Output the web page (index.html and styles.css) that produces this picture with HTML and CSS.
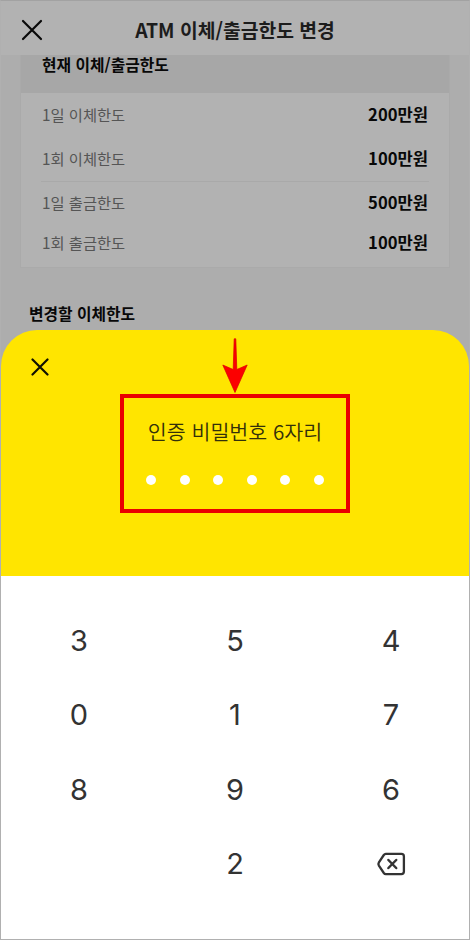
FILE: index.html
```
<!DOCTYPE html>
<html lang="ko">
<head>
  <meta charset="UTF-8">
  <meta name="viewport" content="width=device-width, initial-scale=1.0">
  <title>ATM 이체/출금한도 변경</title>
  <link rel="stylesheet" href="styles.css">
</head>
<body>
  <div class="screen">
    <header class="topbar">
      <svg class="close" width="22" height="22" viewBox="0 0 22 22">
        <path d="M2 2L20 20M20 2L2 20" stroke="#080808" stroke-width="2.2" stroke-linecap="round"/>
      </svg>
      <h1>ATM 이체/출금한도 변경</h1>
    </header>

    <main class="content">
      <section class="card">
        <h2>현재 이체/출금한도</h2>
        <div class="rows">
          <div class="row"><span>1일 이체한도</span><strong>200만원</strong></div>
          <div class="row"><span>1회 이체한도</span><strong>100만원</strong></div>
        </div>
        <div class="rows last">
          <div class="row"><span>1일 출금한도</span><strong>500만원</strong></div>
          <div class="row"><span>1회 출금한도</span><strong>100만원</strong></div>
        </div>
      </section>
      <h3>변경할 이체한도</h3>
    </main>

    <section class="sheet">
      <svg class="sheet-close" width="18" height="18" viewBox="0 0 18 18">
        <path d="M1.5 1.5L16.5 16.5M16.5 1.5L1.5 16.5" stroke="#111100" stroke-width="2.2" stroke-linecap="round"/>
      </svg>
      <svg class="arrow" width="26" height="56" viewBox="0 0 26 56">
        <path d="M12.2 0.8H13.8L14.8 31.5L25.2 27L13 54.5L0.8 27L11.2 31.5Z" fill="#fc0000" stroke="#d90000" stroke-width="0.7"/>
      </svg>
      <div class="pin-box">
        <p>인증 비밀번호 6자리</p>
        <div class="dots">
          <i></i><i></i><i></i><i></i><i></i><i></i>
        </div>
      </div>
    </section>

    <div class="keypad">
      <button>3</button>
      <button>5</button>
      <button>4</button>
      <button>0</button>
      <button>1</button>
      <button>7</button>
      <button>8</button>
      <button>9</button>
      <button>6</button>
      <span></span>
      <button>2</button>
      <button aria-label="지우기">
        <svg width="30" height="24" viewBox="0 0 30 24">
          <path d="M9.8 1.9H25.4Q27.9 1.9 27.9 4.4V19.6Q27.9 22.1 25.4 22.1H9.8Q8.6 22.1 7.8 21L2.9 13.6Q1.9 12 2.9 10.4L7.8 3Q8.6 1.9 9.8 1.9Z" fill="none" stroke="#333" stroke-width="2.3"/>
          <path d="M12.4 8L20.2 16M20.2 8L12.4 16" stroke="#333" stroke-width="2.5" stroke-linecap="round"/>
        </svg>
      </button>
    </div>
  </div>
</body>
</html>
```
FILE: styles.css
```
* {
  box-sizing: border-box;
}

body {
  margin: 0;
  font-family: "Noto Sans CJK KR", sans-serif;
  color: #080808;
}

h1, h2, h3, p {
  margin: 0;
}

.screen {
  display: flex;
  flex-direction: column;
  width: 470px;
  height: 940px;
  border: 1px solid #b0b0b0;
  border-top-color: #a2a2a2;
  background: #adadad;
  overflow: hidden;
}

.topbar {
  position: relative;
  display: flex;
  align-items: center;
  justify-content: center;
  height: 54px;
  padding-top: 3px;
  background: #b2b2b2;
  flex-shrink: 0;
}

.topbar .close {
  position: absolute;
  left: 20px;
  top: 18px;
}

h1 {
  font-size: 19.3px;
  font-weight: 700;
  line-height: 28px;
  color: #1c1c1c;
  white-space: nowrap;
}

.content {
  height: 275px;
  padding: 0 19px;
  flex-shrink: 0;
}

.card {
  height: 213px;
  background: #b2b2b2;
  border: 1px solid #aaa;
  border-top: 0;
}

h2 {
  height: 38px;
  padding-left: 21px;
  background: #a7a7a7;
  font-size: 15.8px;
  font-weight: 700;
  line-height: 20px;
}

.rows {
  margin: 0 20px;
  height: 89px;
  border-bottom: 1px solid #a9a9a9;
}

.rows.last {
  height: 80px;
  border-bottom: 0;
}

.row {
  display: flex;
  justify-content: space-between;
  align-items: center;
  height: 44px;
  padding: 0 1px 3px;
  font-size: 15.3px;
  color: #555;
}

.rows.last .row {
  height: 40px;
  padding-bottom: 1px;
}

.row strong {
  font-size: 16.6px;
  font-weight: 700;
  color: #080808;
}

h3 {
  margin: 35px 0 0 9px;
  font-size: 15.8px;
  font-weight: 700;
  line-height: 22px;
}

.sheet {
  position: relative;
  display: flex;
  justify-content: center;
  height: 246px;
  padding-top: 64px;
  background: #ffe500;
  border-radius: 36px 36px 0 0;
  flex-shrink: 0;
}

.sheet-close {
  position: absolute;
  left: 30px;
  top: 28px;
}

.arrow {
  position: absolute;
  left: 221px;
  top: 8px;
}

.pin-box {
  width: 230px;
  height: 119px;
  padding-top: 18px;
  border: 4px solid #ea0000;
  text-align: center;
}

.pin-box p {
  font-size: 20.6px;
  line-height: 30px;
  font-weight: 350;
  color: #33300a;
}

.dots {
  display: flex;
  justify-content: space-between;
  width: 178px;
  margin: 28.5px auto 0;
}

.dots i {
  width: 10px;
  height: 10px;
  border-radius: 50%;
  background: #fff;
}

.keypad {
  display: grid;
  grid-template-columns: repeat(3, 1fr);
  grid-auto-rows: 74.5px;
  flex: 1;
  padding-top: 27px;
  background: #fff;
}

.keypad button {
  display: flex;
  align-items: center;
  justify-content: center;
  padding: 0;
  border: 0;
  background: none;
  font-family: Inter, sans-serif;
  font-size: 29px;
  color: #333;
}
```
